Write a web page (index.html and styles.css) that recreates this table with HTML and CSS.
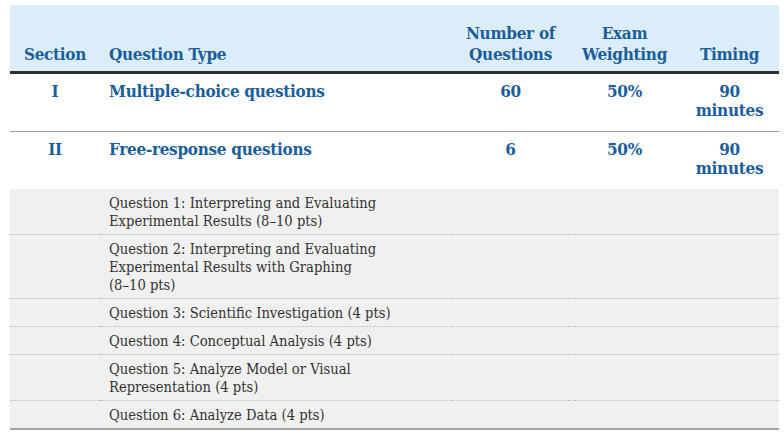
FILE: index.html
```html
<!DOCTYPE html>
<html>
<head>
<meta charset="utf-8">
<link rel="stylesheet" href="styles.css">
</head>
<body>
<div class="wrap">
<table class="exam">
  <colgroup>
    <col class="c-sec"><col class="c-type"><col class="c-num"><col class="c-wt"><col class="c-time">
  </colgroup>
  <thead>
    <tr>
      <th class="center">Section</th>
      <th class="left">Question Type</th>
      <th class="center">Number of<br>Questions</th>
      <th class="center">Exam<br>Weighting</th>
      <th class="center">Timing</th>
    </tr>
  </thead>
  <tbody>
    <tr class="main first">
      <td class="center">I</td>
      <td class="left">Multiple-choice questions</td>
      <td class="center">60</td>
      <td class="center">50%</td>
      <td class="center">90<br>minutes</td>
    </tr>
    <tr class="main">
      <td class="center">II</td>
      <td class="left">Free-response questions</td>
      <td class="center">6</td>
      <td class="center">50%</td>
      <td class="center">90<br>minutes</td>
    </tr>
    <tr class="sub">
      <td></td>
      <td class="left">Question 1: Interpreting and Evaluating<br>Experimental Results (8–10 pts)</td>
      <td></td><td></td><td></td>
    </tr>
    <tr class="sub">
      <td></td>
      <td class="left">Question 2: Interpreting and Evaluating<br>Experimental Results with Graphing<br>(8–10 pts)</td>
      <td></td><td></td><td></td>
    </tr>
    <tr class="sub">
      <td></td>
      <td class="left">Question 3: Scientific Investigation (4 pts)</td>
      <td></td><td></td><td></td>
    </tr>
    <tr class="sub">
      <td></td>
      <td class="left">Question 4: Conceptual Analysis (4 pts)</td>
      <td></td><td></td><td></td>
    </tr>
    <tr class="sub">
      <td></td>
      <td class="left">Question 5: Analyze Model or Visual<br>Representation (4 pts)</td>
      <td></td><td></td><td></td>
    </tr>
    <tr class="sub last">
      <td></td>
      <td class="left">Question 6: Analyze Data (4 pts)</td>
      <td></td><td></td><td></td>
    </tr>
  </tbody>
</table>
</div>
</body>
</html>
```
FILE: styles.css
```css
html, body {
  margin: 0;
  padding: 0;
  background: #ffffff;
}
.wrap {
  padding: 5px 5px 0 10px;
}
.exam {
  width: 769px;
  border-collapse: collapse;
  table-layout: fixed;
  font-family: "DejaVu Serif Condensed", "DejaVu Serif", serif;
}
.c-sec { width: 90px; }
.c-type { width: 352px; }
.c-num { width: 117px; }
.c-wt { width: 111px; }
.c-time { width: 99px; }

.exam th {
  background: #dbedf8;
  color: #1b5e9b;
  font-weight: bold;
  font-size: 17px;
  line-height: 21px;
  height: 60px;
  vertical-align: bottom;
  padding: 0 2px 6px;
  border-bottom: 3px solid #2b2d33;
  letter-spacing: -0.3px;
}
.exam th.left { text-align: left; padding-left: 9px; }
.center { text-align: center; }

.main td {
  color: #1b5e9b;
  font-weight: bold;
  font-size: 17px;
  line-height: 19px;
  vertical-align: top;
  padding: 8px 2px 11px;
  letter-spacing: -0.3px;
}
.main td.left { text-align: left; padding-left: 9px; }
.main.first td { border-bottom: 1px solid #9a9a9a; }

.sub td {
  background: #f0f0f0;
  color: #333333;
  font-size: 14.6px;
  line-height: 18px;
  padding: 5px 2px 4px;
  border-bottom: 1px dotted #b8b8b8;
  vertical-align: top;
}
.sub td.left { text-align: left; padding-left: 9px; }
.sub.last td { border-bottom: 2px solid #a3a3a3; }
```
